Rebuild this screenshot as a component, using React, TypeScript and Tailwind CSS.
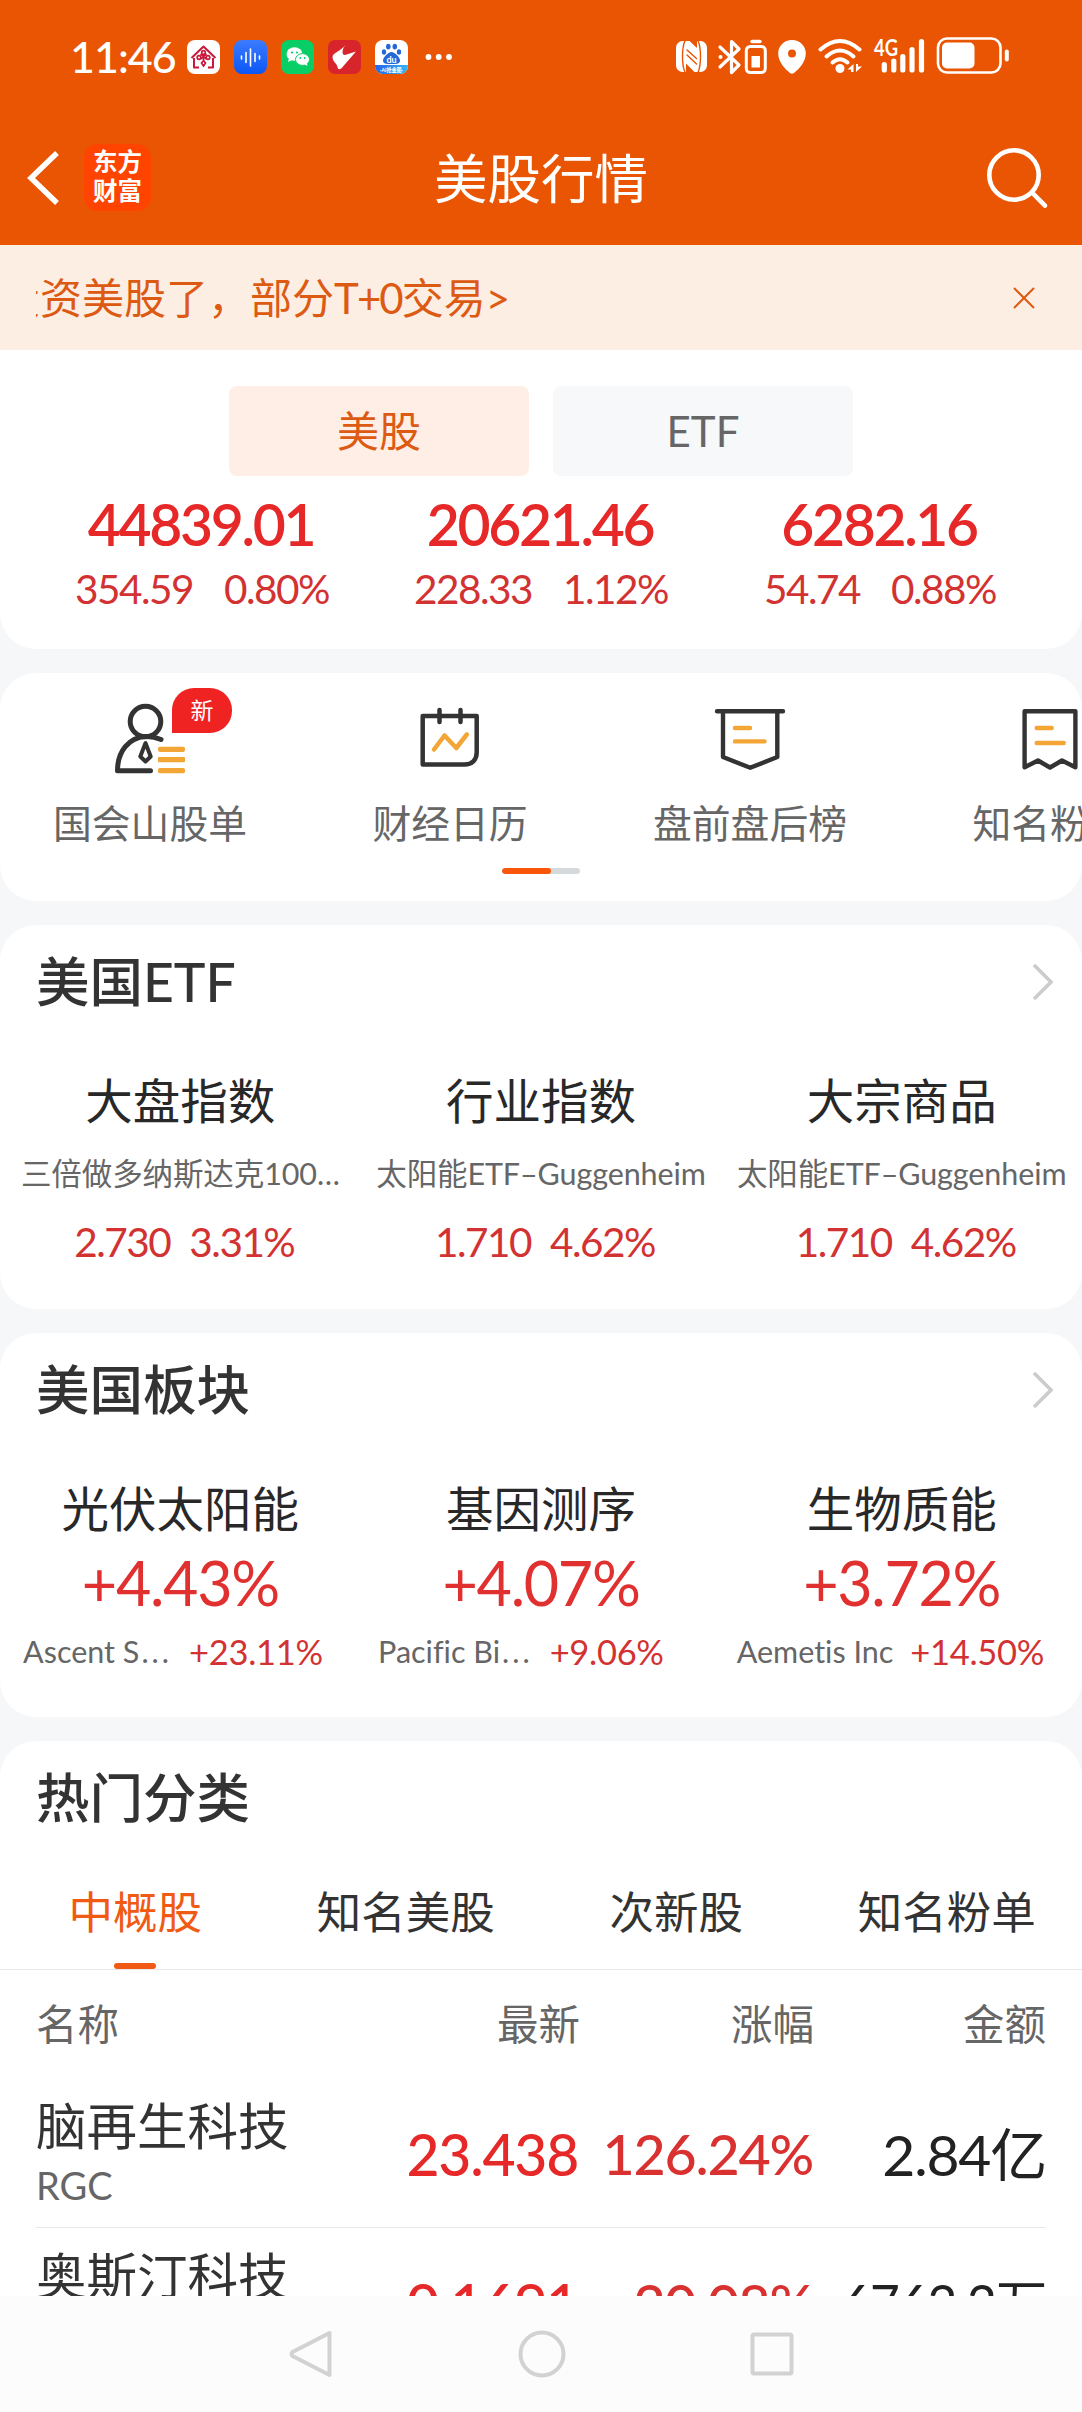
import clsx from "clsx";
import type { ReactNode } from "react";

type IndexQuote = {
	price: string;
	change: string;
	percent: string;
};

type EtfGroup = {
	title: string;
	fund: string;
	price: string;
	percent: string;
};

type Sector = {
	title: string;
	percent: string;
	leader: string;
	truncated?: boolean;
	leaderPercent: string;
};

type Stock = {
	name: string;
	code: string;
	price: string;
	percent: string;
	amount: string;
};

const indexes: IndexQuote[] = [
	{ price: "44839.01", change: "354.59", percent: "0.80%" },
	{ price: "20621.46", change: "228.33", percent: "1.12%" },
	{ price: "6282.16", change: "54.74", percent: "0.88%" },
];

const etfGroups: EtfGroup[] = [
	{
		title: "大盘指数",
		fund: "三倍做多纳斯达克100…",
		price: "2.730",
		percent: "3.31%",
	},
	{
		title: "行业指数",
		fund: "太阳能ETF–Guggenheim",
		price: "1.710",
		percent: "4.62%",
	},
	{
		title: "大宗商品",
		fund: "太阳能ETF–Guggenheim",
		price: "1.710",
		percent: "4.62%",
	},
];

const sectors: Sector[] = [
	{
		title: "光伏太阳能",
		percent: "+4.43%",
		leader: "Ascent S",
		truncated: true,
		leaderPercent: "+23.11%",
	},
	{
		title: "基因测序",
		percent: "+4.07%",
		leader: "Pacific Bi",
		truncated: true,
		leaderPercent: "+9.06%",
	},
	{
		title: "生物质能",
		percent: "+3.72%",
		leader: "Aemetis Inc",
		leaderPercent: "+14.50%",
	},
];

const tabs = ["中概股", "知名美股", "次新股", "知名粉单"];

const stocks: Stock[] = [
	{
		name: "脑再生科技",
		code: "RGC",
		price: "23.438",
		percent: "126.24%",
		amount: "2.84亿",
	},
	{
		name: "奥斯汀科技",
		code: "OST",
		price: "0.1691",
		percent: "20.08%",
		amount: "6762.2万",
	},
];

const AppIcons = () => (
	<div className="mt-[2px] ml-[10px] flex items-center gap-[14px]">
		<svg className="h-[34px] w-[33px]" viewBox="0 0 33 34" fill="none">
			<rect width="33" height="34" rx="8" fill="#fff" />
			<g stroke="#c8193c" strokeWidth="2" strokeLinejoin="round">
				<path d="M4.500 18 16.500 6.500 28.500 18" />
				<path d="M7 18v9.500h5M26 18v9.500h-5" />
			</g>
			<g stroke="#c8193c" strokeWidth="1.700">
				<circle cx="16.500" cy="12.500" r="1.800" />
				<circle cx="12" cy="17.500" r="1.800" />
				<circle cx="21" cy="17.500" r="1.800" />
				<path d="m13.500 19 6-5M19.500 19l-6-5M16.500 14.500v6M16.500 20.500l2 2.500-2 3-2-3z" />
			</g>
		</svg>
		<svg className="h-[34px] w-[33px]" viewBox="0 0 33 34" fill="none">
			<defs>
				<linearGradient id="voice" x1="0" y1="0" x2="0" y2="1">
					<stop stopColor="#3c7bff" />
					<stop offset="1" stopColor="#0b56f5" />
				</linearGradient>
			</defs>
			<rect width="33" height="34" rx="8" fill="url(#voice)" />
			<path
				d="M7.500 16v3M12 12.500v10M16.500 9v17M21 13.500v8M25.500 16v3"
				stroke="#fff"
				strokeWidth="1.600"
				strokeLinecap="round"
			/>
		</svg>
		<svg className="h-[34px] w-[33px]" viewBox="0 0 33 34" fill="none">
			<rect width="33" height="34" rx="8" fill="#07cf66" />
			<g fill="#fff">
				<ellipse cx="13.500" cy="14" rx="8" ry="6.800" />
				<path d="m8 18-1 4 4-2z" />
				<ellipse
					cx="21.500"
					cy="19.500"
					rx="7"
					ry="5.900"
					stroke="#07cf66"
					strokeWidth="1"
				/>
				<path d="m23 24 3.500 2-1-4z" />
			</g>
			<g fill="#07cf66">
				<circle cx="11" cy="12.500" r="1.100" />
				<circle cx="16" cy="12.500" r="1.100" />
				<circle cx="19.300" cy="18" r=".9" />
				<circle cx="23.700" cy="18" r=".9" />
			</g>
		</svg>
		<svg className="h-[34px] w-[33px]" viewBox="0 0 33 34" fill="none">
			<rect width="33" height="34" rx="7" fill="#d8252c" />
			<path
				d="M17.500 5c-3 3.500-3.500 6.500-2.500 9.500l2 .5 11-3.500L15 26.500c-2.500 3.500-5 3.500-5.500.5-.5-3.500-5-5.500-5-10C4.500 13 13 11 17.500 5z"
				fill="#fff"
			/>
		</svg>
		<svg className="h-[34px] w-[33px]" viewBox="0 0 33 34" fill="none">
			<defs>
				<clipPath id="paw">
					<rect width="33" height="34" rx="8" />
				</clipPath>
				<linearGradient id="pawStrip">
					<stop stopColor="#2563e8" />
					<stop offset="1" stopColor="#35b6f2" />
				</linearGradient>
			</defs>
			<g clipPath="url(#paw)">
				<rect width="33" height="34" fill="#fff" />
				<rect y="25" width="33" height="9" fill="url(#pawStrip)" />
			</g>
			<g fill="#2468d8">
				<ellipse cx="13.300" cy="6.600" rx="2.300" ry="2.900" />
				<ellipse cx="19.800" cy="6.600" rx="2.300" ry="2.900" />
				<ellipse cx="9" cy="12" rx="2.200" ry="2.800" />
				<ellipse cx="24" cy="12" rx="2.200" ry="2.800" />
				<path d="M16.500 12c-3.500 0-8.500 5.500-8.500 8.500S10.500 24 16.500 24s8.500-.5 8.500-3.500S20 12 16.500 12z" />
			</g>
			<text
				x="16.500"
				y="22.500"
				fill="#fff"
				fontSize="9"
				fontWeight="700"
				textAnchor="middle"
			>
				du
			</text>
			<text
				x="5"
				y="31.500"
				fill="#fff"
				fontSize="6"
				fontWeight="700"
				textLength="23"
				lengthAdjust="spacingAndGlyphs"
			>
				·AI抢金图·
			</text>
		</svg>
		<svg className="ml-[3px] h-2 w-7" viewBox="0 0 28 8" fill="#fff">
			<circle cx="3.500" cy="4" r="2.900" />
			<circle cx="13.700" cy="4" r="2.900" />
			<circle cx="24" cy="4" r="2.900" />
		</svg>
	</div>
);

const SystemIcons = () => (
	<svg
		className="h-[40px] w-[336px]"
		viewBox="676 36 336 40"
		fill="none"
		stroke="#fff"
		strokeLinecap="round"
		strokeLinejoin="round"
	>
		{/* NFC */}
		<rect x="677" y="41" width="31" height="31" rx="6.500" fill="#fff" stroke="none" />
		<g stroke="#e95503" strokeWidth="1.400">
			<path d="M686 40.500q-2.500 6-2.500 16t2.500 16" />
			<path d="M699 40.500q2.500 6 2.500 16t-2.500 16" />
			<path d="m688 50 9.500 8.500M688 55l9.500 9" />
		</g>
		<path d="M690 40.500h8v7.500zM687 63.500v9h9z" fill="#e95503" stroke="none" />
		{/* Bluetooth with battery */}
		<path
			d="m721 47 19 18-7.500 7.500V41.500L740 49l-19 18"
			strokeWidth="3.200"
		/>
		<circle cx="721.500" cy="57" r="2" fill="#fff" stroke="none" />
		<rect x="747.300" y="46.500" width="19" height="26" rx="4" strokeWidth="3" />
		<path d="M753 41.500h8" strokeWidth="3.400" />
		<rect x="752.500" y="56" width="8.500" height="11.500" fill="#fff" stroke="none" />
		{/* Location */}
		<path
			fill="#fff"
			fillRule="evenodd"
			stroke="none"
			d="M793 40c-8 0-13.800 6-13.800 13.500C779.200 62 786 69 791 73q2 1.500 4 0c5-4 11.800-11 11.800-19.500C806.800 46 801 40 793 40zm0 9.500a4 4 0 1 1 0 8 4 4 0 0 1 0-8z"
		/>
		{/* Wi-Fi */}
		<g strokeWidth="4">
			<path d="M821.500 49.500q19.500-17 39 0" />
			<path d="M827.500 56.500q13.500-12 27 0" />
			<path d="M833.500 62.500q7.500-6.500 15 0" />
		</g>
		<circle cx="841" cy="68.500" r="4.500" fill="#fff" stroke="none" />
		<path
			fill="#fff"
			stroke="none"
			d="M848.500 69.500l6-5.500v8h-2.500v-2.500zM863 66.500l-6 5.500v-8h2v2.500z"
		/>
		{/* Cellular */}
		<text
			x="875"
			y="55.500"
			fill="#fff"
			stroke="none"
			fontSize="22"
			fontWeight="700"
			textLength="24"
			lengthAdjust="spacingAndGlyphs"
		>
			4G
		</text>
		<path
			d="M885.300 64.500v5.500M894.800 61v9M903.800 56.500v13.500M913 49.500v20.500M922.500 41.500v28.500"
			strokeWidth="5.200"
		/>
		{/* Battery */}
		<rect x="939" y="38.500" width="62.500" height="34" rx="9" strokeWidth="2.600" />
		<rect x="943" y="42.500" width="32.500" height="26" rx="5" fill="#fff" stroke="none" />
		<path d="M1007.800 51.500v8" strokeWidth="4" />
	</svg>
);

const PersonIcon = () => (
	<svg className="h-[76px] w-[76px]" viewBox="0 0 76 76" fill="none">
		<g stroke="#333" strokeWidth="5" strokeLinecap="round" strokeLinejoin="round">
			<circle cx="33.500" cy="21.500" r="15.300" />
			<path d="M49 39.500Q41 36 33.500 36.500C17 37.500 5.500 51 5.500 70.800h33" />
			<path d="m33.500 43-5.200 13.500 5.200 5 5.200-5z" strokeWidth="4" />
		</g>
		<g fill="#f3a536">
			<rect x="46" y="46.700" width="27" height="5.200" rx="1.800" />
			<rect x="46" y="57" width="27" height="5.200" rx="1" />
			<rect x="46" y="68" width="27" height="5.200" rx="1.800" />
		</g>
	</svg>
);

const CalendarIcon = () => (
	<svg className="h-[76px] w-[76px]" viewBox="0 0 76 76" fill="none">
		<g stroke="#333" strokeWidth="4.500" strokeLinecap="round" strokeLinejoin="round">
			<path d="M10.700 16h54v36.500c0 7.500-5 12-12 12h-42z" />
			<path d="M27.500 10v12M48.500 10v12" />
		</g>
		<path
			d="M22 49.500 32.500 35.500 44.300 48l10.500-13.500"
			stroke="#f3a536"
			strokeWidth="4.500"
			strokeLinecap="round"
			strokeLinejoin="round"
		/>
	</svg>
);

const BannerIcon = () => (
	<svg className="h-[76px] w-[76px]" viewBox="0 0 76 76" fill="none">
		<path
			d="M5 11.300h66M11 12v45l27.200 10.800L65.300 57V12"
			stroke="#333"
			strokeWidth="4.400"
			strokeLinecap="round"
			strokeLinejoin="round"
		/>
		<path
			d="M23 28h15M23 41.400h29.500"
			stroke="#f3a536"
			strokeWidth="4.400"
			strokeLinecap="round"
		/>
	</svg>
);

const ReceiptIcon = () => (
	<svg className="h-[76px] w-[76px]" viewBox="0 0 76 76" fill="none">
		<path
			d="M12.600 11.300h50.800v56L50 60.500l-12 7-12-7-13.400 6.800z"
			stroke="#333"
			strokeWidth="4.400"
			strokeLinecap="round"
			strokeLinejoin="round"
		/>
		<path
			d="M24.700 28h15M24.700 43h27"
			stroke="#f3a536"
			strokeWidth="4.400"
			strokeLinecap="round"
		/>
	</svg>
);

const shortcuts = [
	{ label: "国会山股单", icon: <PersonIcon />, isNew: true },
	{ label: "财经日历", icon: <CalendarIcon /> },
	{ label: "盘前盘后榜", icon: <BannerIcon /> },
	{ label: "知名粉单", icon: <ReceiptIcon /> },
];

const StatusBar = () => (
	<div className="flex h-[112px] items-center justify-between pr-[71px] pl-[70px]">
		<div className="flex items-center">
			<span className="w-[107px] text-[43px] leading-none font-medium tracking-[-1px] whitespace-nowrap">
				11:46
			</span>
			<AppIcons />
		</div>
		<SystemIcons />
	</div>
);

const NavBar = () => (
	<div className="grid h-[133px] grid-cols-3 items-center px-[26px] pb-[2px]">
		<div className="flex items-center">
			<svg className="h-[56px] w-[34px]" viewBox="0 0 34 56" fill="none">
				<path d="M31 3 5 28l26 25" stroke="#fff" strokeWidth="5.500" />
			</svg>
			<div className="ml-[24px] flex h-[67px] w-[67px] flex-col items-center justify-center rounded-[14px] bg-[#ff4400] pb-[3px] text-[24.500px] leading-[29px] font-bold">
				<span>东方</span>
				<span>财富</span>
			</div>
		</div>
		<h1 className="pt-[2px] text-center text-[53.500px] leading-none">
			美股行情
		</h1>
		<svg
			className="mr-[6px] h-[64px] w-[64px] justify-self-end"
			viewBox="0 0 64 64"
			fill="none"
			stroke="#fff"
			strokeWidth="4.600"
			strokeLinecap="round"
		>
			<circle cx="28" cy="29" r="24.700" />
			<path d="m46.500 47 12.500 12.700" />
		</svg>
	</div>
);

const Notice = () => (
	<div className="flex h-[105px] items-center justify-between bg-[#fdeee4] pr-[46px] pl-9 text-[42px] leading-none text-[#dc5a12]">
		<div className="flex w-[480px] justify-end overflow-hidden whitespace-nowrap">
			<span className="mr-[6px] py-2">
				以投资美股了，部分<span className="tracking-[-2px]">T+0</span>交易&gt;
			</span>
		</div>
		<svg className="h-6 w-6" viewBox="0 0 24 24" stroke="#dc5a12" strokeWidth="2">
			<path d="m2 2 20 20M22 2 2 22" />
		</svg>
	</div>
);

const Card = ({
	className,
	children,
}: {
	className?: string;
	children: ReactNode;
}) => (
	<section className={clsx("shrink-0 overflow-hidden bg-white", className)}>
		{children}
	</section>
);

const CardHeader = ({ title, more }: { title: string; more?: boolean }) => (
	<div className="flex h-[114px] items-center justify-between pr-[27px] pl-9">
		<h2 className="text-[53.500px] leading-none font-medium text-[#333]">{title}</h2>
		{more ? (
			<svg className="h-[38px] w-[24px]" viewBox="0 0 24 38" fill="none">
				<path d="m3 2 17 17L3 36" stroke="#ccc" strokeWidth="3.600" />
			</svg>
		) : null}
	</div>
);

const NavigationBar = () => (
	<div className="flex h-[116px] shrink-0 items-center justify-center gap-[184px] bg-[#fcfcfc]">
		<svg className="h-[50px] w-[46px]" viewBox="0 0 46 50" fill="none">
			<path
				d="M41.500 4v42L4.500 27q-2-2 0-4z"
				stroke="#d2d2d2"
				strokeWidth="4"
				strokeLinejoin="round"
			/>
		</svg>
		<svg className="h-[48px] w-[48px]" viewBox="0 0 48 48" fill="none">
			<circle cx="24" cy="24" r="21.500" stroke="#d2d2d2" strokeWidth="4" />
		</svg>
		<svg className="h-[44px] w-[44px]" viewBox="0 0 44 44" fill="none">
			<rect x="2.500" y="2.500" width="39" height="39" rx="1.500" stroke="#d2d2d2" strokeWidth="4" />
		</svg>
	</div>
);

const App = () => {
	return (
		<div className="flex h-[2412px] w-[1082px] flex-col overflow-hidden bg-[#f6f7f9] font-['Lato','Noto_Sans_CJK_SC',sans-serif] [font-variant-ligatures:none]">
			<header className="shrink-0 bg-[#e95503] text-white">
				<StatusBar />
				<NavBar />
			</header>

			<main className="flex min-h-0 flex-1 flex-col gap-6 overflow-hidden">
				<Card className="h-[404px] rounded-b-[36px]">
					<Notice />
					<div className="flex justify-center gap-6 pt-9">
						<button
							type="button"
							className="h-[90px] w-[300px] rounded-lg bg-[#ffeee5] text-[42px] leading-none text-[#dc5a12]"
						>
							美股
						</button>
						<button
							type="button"
							className="h-[90px] w-[300px] rounded-lg bg-[#f7f8fa] text-[42px] leading-none text-[#666]"
						>
							ETF
						</button>
					</div>
					<div className="grid grid-cols-[repeat(3,339px)] justify-center pt-4">
						{indexes.map(({ price, change, percent }) => (
							<div
								key={price}
								className="flex flex-col items-center text-[#e62828]"
							>
								<span className="pr-[2px] text-[57px] leading-[64px] font-semibold tracking-[-2.300px]">
									{price}
								</span>
								<span className="flex gap-[31px] text-[40.500px] leading-[66px] tracking-[-1.500px] text-[#d23232]">
									<span>{change}</span>
									<span>{percent}</span>
								</span>
							</div>
						))}
					</div>
				</Card>

				<Card className="h-[228px] rounded-[36px]">
					<div className="flex w-[1202px]">
						{shortcuts.map(({ label, icon, isNew }) => (
							<div
								key={label}
								className="relative flex w-[300px] shrink-0 flex-col items-center pt-[27px]"
							>
								{icon}
								{isNew ? (
									<span className="absolute top-[15px] left-[172px] flex h-[45px] w-[60px] items-center justify-center rounded-[22px] rounded-bl-none bg-[#f02323] text-[23px] leading-none text-white">
										新
									</span>
								) : null}
								<span className="mt-[25px] text-[38.800px] leading-[44px] text-[#666]">
									{label}
								</span>
							</div>
						))}
					</div>
					<div className="mx-auto mt-[23px] h-[6px] w-[78px] overflow-hidden rounded-full bg-[#d5d9dc]">
						<div className="h-full w-[49px] rounded-full bg-[#fa560a]" />
					</div>
				</Card>

				<Card className="h-[384px] rounded-[36px]">
					<CardHeader title="美国ETF" more />
					<div className="grid grid-cols-3 pt-[30px] text-center">
						{etfGroups.map(({ title, fund, price, percent }) => (
							<div key={title} className="flex flex-col items-center">
								<h3 className="text-[47.500px] leading-[64px] text-[#282828]">
									{title}
								</h3>
								<p className="mt-[8px] text-[30.500px] leading-[64px] tracking-[-0.100px] whitespace-nowrap text-[#666]">
									{fund}
								</p>
								<p className="flex gap-[19px] pl-2 text-[40.500px] leading-[73px] tracking-[-1.500px] text-[#d23232]">
									<span>{price}</span>
									<span>{percent}</span>
								</p>
							</div>
						))}
					</div>
				</Card>

				<Card className="h-[384px] rounded-[36px]">
					<CardHeader title="美国板块" more />
					<div className="grid grid-cols-3 pt-[30px]">
						{sectors.map(
							({ title, percent, leader, truncated, leaderPercent }) => (
								<div key={title} className="flex flex-col items-center">
									<h3 className="text-[47.500px] leading-[64px] text-[#282828]">
										{title}
									</h3>
									<p className="text-[61px] leading-[83px] tracking-[-1.300px] text-[#e03030]">
										{percent}
									</p>
									<p className="flex w-full items-center gap-[17px] leading-[55px] whitespace-nowrap">
										<span className="w-[172px] text-right text-[30.500px] text-[#666]">
											{leader}
											{truncated ? (
												<span className="pl-[2px] tracking-[3px]">...</span>
											) : null}
										</span>
										<span className="text-[34.500px] tracking-[-0.300px] text-[#d23232]">
											{leaderPercent}
										</span>
									</p>
								</div>
							),
						)}
					</div>
				</Card>

				<Card className="h-[600px] rounded-t-[36px]">
					<CardHeader title="热门分类" />
					<div className="grid h-[115px] grid-cols-4 border-b border-[#e8e8e8]">
						{tabs.map((tab, i) => (
							<div
								key={tab}
								className={clsx(
									"flex flex-col items-center justify-between pt-[31px] text-[44.500px] leading-[52px]",
									i === 0 ? "text-[#f05a12]" : "text-[#333]",
								)}
							>
								{tab}
								{i === 0 ? (
									<span className="h-[6px] w-[42px] rounded-full bg-[#f05a12]" />
								) : null}
							</div>
						))}
					</div>
					<div className="grid h-[108px] grid-cols-[310px_234px_234px_232px] items-center px-9 pt-[2px] text-right text-[41.500px] leading-none text-[#666]">
						<span className="text-left">名称</span>
						<span>最新</span>
						<span>涨幅</span>
						<span>金额</span>
					</div>
					{stocks.map(({ name, code, price, percent, amount }) => (
						<div
							key={name}
							className="mx-9 grid h-[150px] grid-cols-[310px_234px_234px_232px] items-center border-b border-[#e8e8e8] text-right text-[57px] leading-none tracking-[-1.200px] whitespace-nowrap"
						>
							<div className="text-left tracking-normal">
								<p className="text-[50.500px] leading-[65px] text-[#333]">{name}</p>
								<p className="text-[38px] leading-[54px] text-[#666]">{code}</p>
							</div>
							<span className="pt-[3px] pr-[2px] font-medium text-[#e62828]">
								{price}
							</span>
							<span className="pt-[3px] pr-[1px] text-[55.500px] font-medium text-[#d93030]">
								{percent}
							</span>
							{/* long amounts shrink to stay inside the column */}
							<span
								className={clsx(
									"pt-[3px] text-[#222]",
									amount.length > 6 && "text-[51.500px]",
								)}
							>
								{amount}
							</span>
						</div>
					))}
				</Card>
			</main>

			<NavigationBar />
		</div>
	);
};

export default App;
